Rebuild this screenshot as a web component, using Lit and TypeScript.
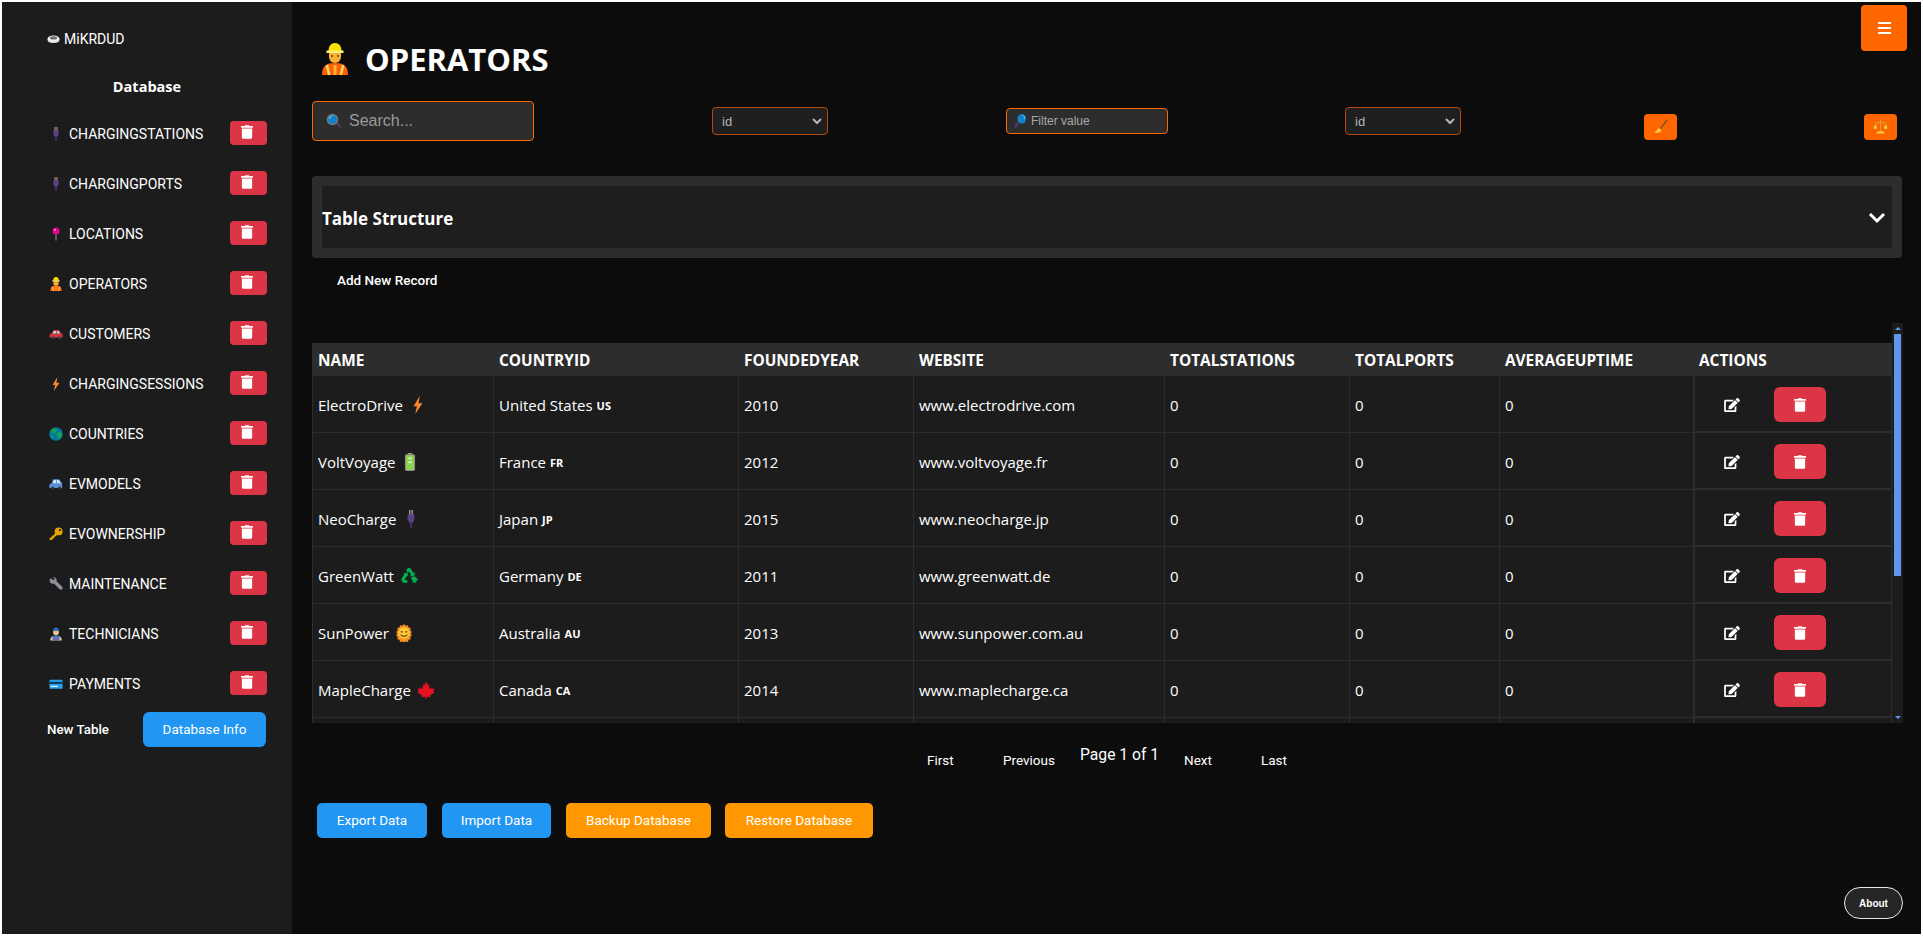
import { LitElement, html, css, svg } from "lit";
import { customElement } from "lit/decorators.js";

const em = (inner: unknown, w = 14, h = 14) =>
  html`<svg class="em" width=${w} height=${h} viewBox="0 0 32 32">${inner}</svg>`;

const plug = svg`<path d="M12.500 0h2.500v9h-2.500zM17 0h2.500v9H17z" fill="#a89a8c"/><path d="M10 8h12v9l-3.500 6h-5L10 17z" fill="#5c3f85"/><path d="M14.300 22h3.400v10h-3.400z" fill="#46306a"/>`;
const pin = svg`<path d="M14.700 14h2.600v17h-2.600z" fill="#8a8a8a"/><circle cx="16" cy="9" r="8" fill="#e3008c"/><circle cx="13.500" cy="6.500" r="2.200" fill="#ffb3e0"/>`;
const worker = svg`<path d="M3 32c0-9 4-12 13-12s13 3 13 12z" fill="#f7630c"/><path d="M9 21.500l2.500 10.500H9l-2.500-9.500zM23 21.500L20.500 32H23l2.500-9.500z" fill="#ffd35a"/><path d="M14.500 22h3v10h-3z" fill="#ffb02e"/><path d="M10 9h12v5a6 6 0 0 1-12 0z" fill="#f9b233"/><circle cx="13" cy="13" r="1" fill="#6b3e00"/><circle cx="19" cy="13" r="1" fill="#6b3e00"/><path d="M9.500 8c0-5 2.500-8 6.500-8s6.500 3 6.500 8z" fill="#fce100"/><path d="M7.500 7.500h17V10h-17z" fill="#fff27a"/>`;
const car = svg`<path d="M10 7h13l5 8h3v9H1v-7l5-2z" fill="#d13438"/><path d="M11 9h5v6H8zM18 9h4l3.500 6H18z" fill="#a6d8f0"/><circle cx="9" cy="24" r="3.500" fill="#444"/><circle cx="24" cy="24" r="3.500" fill="#444"/>`;
const bolt = svg`<path d="M19 0L8 18h6l-3 14 13-19h-7z" fill="#f7872e"/>`;
const globe = svg`<circle cx="16" cy="16" r="15.500" fill="#0078a8"/><path d="M8 4l8-1 3 4-4 3-1 5-5-1-4-5zM18 13l8-2 4 6-4 9-5 1-1-7-3-3zM3 19l5 1 3 5-2 2-5-4z" fill="#16a34a"/>`;
const van = svg`<path d="M9 5h14l7 9v11H1v-9l5-1z" fill="#5b8fd9"/><path d="M11 7h5v7H8zM18 7h4l5 7h-9z" fill="#cfe6f7"/><circle cx="9" cy="25" r="3.500" fill="#333"/><circle cx="24" cy="25" r="3.500" fill="#333"/>`;
const key = svg`<circle cx="22" cy="10" r="9" fill="#eaa300"/><circle cx="25" cy="7" r="2.500" fill="#1c1c1c"/><path d="M16 12l4 4L7 29l-5 1-1-4 2-2h2v-2h2v-2h2z" fill="#eaa300"/>`;
const wrench = svg`<path d="M4 2l5 5 3-1 1-3-5-2c6-2 11 2 9 8l12 12c2 2 3 5 1 7s-5 1-7-1L11 15C5 17 0 12 2 6z" fill="#8e8e9a"/>`;
const tech = svg`<path d="M3 31c0-8 4-11 13-11s13 3 13 11z" fill="#f9c58c"/><path d="M8 21l3-1h10l3 1v10H8z" fill="#3b78c9"/><rect x="13" y="25" width="6" height="3" fill="#e05a7a"/><circle cx="16" cy="12" r="6.500" fill="#f9c58c"/><path d="M9 9c0-5 3-8 7-8s7 3 7 8z" fill="#2f6db5"/>`;
const card = svg`<rect x="1" y="6" width="30" height="21" rx="2" fill="#29a3e8"/><rect x="1" y="11" width="30" height="5" fill="#123a5a"/><rect x="4" y="20" width="16" height="3" fill="#d7f0ff"/>`;
const battery = svg`<rect x="12" y="0" width="8" height="3" fill="#999"/><rect x="7" y="2" width="18" height="30" rx="3" fill="#8c8c8c"/><rect x="9" y="4" width="14" height="26" rx="1" fill="#8fd14f"/><rect x="13" y="8" width="6" height="3" fill="#d6f5b8"/><rect x="13" y="15" width="6" height="3" fill="#d6f5b8"/>`;
const recycle = svg`<path d="M11 5l5-4 4 3 4 7 3-2-2 8-8-1 3-2-4-6-3 3zM8 12l-6 10 3 6h8v-5H8l5-8 2 2-2-7-8 1zM29 19l-3-2-7 2 4 6-2 2 8 1 0-3 3-3z" fill="#00b050"/>`;
const sun = svg`<path d="M16 0l3 3 4-1 1 4 4 1-1 4 3 3-2 3 2 3-3 3 1 4-4 1-1 4-4-1-3 3-3-3-4 1-1-4-4-1 1-4-3-3 2-3-2-3 3-3-1-4 4-1 1-4 4 1z" fill="#f7931e"/><circle cx="16" cy="16" r="10" fill="#ffc83d"/><path d="M10 14h4M18 14h4" stroke="#7a4a00" stroke-width="2"/><path d="M10 19c3 4 9 4 12 0" stroke="#7a4a00" stroke-width="2" fill="none"/>`;
const maple = svg`<path d="M16 1l3 6 3-1-1 8 4-3 1 3 5-1-2 5 2 2-8 6 1 3-7-1v5h-2v-5l-7 1 1-3-8-6 2-2-2-5 5 1 1-3 4 3-1-8 3 1z" fill="#e81123"/>`;
const lens = svg`<path d="M19 20l3-3 9 10-3 3z" fill="#4d3a6b"/><circle cx="13" cy="13" r="11.500" fill="#7b7b7b"/><circle cx="13" cy="13" r="9" fill="#1180c4"/><path d="M7 12c0-3 3-6 6-6" stroke="#8fd0f5" stroke-width="2" fill="none"/>`;
const lens2 = svg`<path d="M9 18l5 3-7 11-5-3z" fill="#4d3a6b"/><ellipse cx="20" cy="11" rx="10" ry="11" fill="#1180c4"/><path d="M22 3c3 1 5 4 4 8" stroke="#8fd0f5" stroke-width="2" fill="none"/>`;
const broom = svg`<path d="M29 1l2.500 1.500-15 20L14 21z" fill="#7a5230"/><path d="M12 19l6 4-3 6-12 1z" fill="#ffc83d"/>`;
const scales = svg`<path d="M15 1h2v26h-2zM4 7h24v2H4z" fill="#d9a441"/><path d="M1 18l4-9 4 9a4 4 0 0 1-8 0zM23 18l4-9 4 9a4 4 0 0 1-8 0z" fill="#ffc83d" stroke="#c77a10"/><path d="M8 31h16v-3l-4-2h-8l-4 2z" fill="#ffc83d"/>`;
const disk = svg`<ellipse cx="16" cy="15" rx="15" ry="9" fill="#f2f2f2"/><ellipse cx="16" cy="12" rx="9" ry="4" fill="#6f6f6f"/><path d="M2 16c2 7 26 7 28 0v4c-3 6-25 6-28 0z" fill="#d0d0d0"/>`;

const trashPath = html`<svg class="fa" viewBox="0 0 448 512" width="12" height="14"><path fill="currentColor" d="M32 464a48 48 0 0 0 48 48h288a48 48 0 0 0 48-48V128H32zM432 32H312l-9.400-18.700A24 24 0 0 0 281.100 0H166.800a23.700 23.700 0 0 0-21.400 13.300L136 32H16A16 16 0 0 0 0 48v32a16 16 0 0 0 16 16h416a16 16 0 0 0 16-16V48a16 16 0 0 0-16-16z"/></svg>`;
const editIcon = html`<svg class="fa" viewBox="0 0 576 512" width="16" height="14"><path fill="currentColor" d="M402.600 83.200l90.200 90.200c3.800 3.800 3.800 10 0 13.800L274.400 405.600l-92.800 10.300c-12.400 1.400-22.900-9.100-21.500-21.500l10.300-92.800L388.800 83.200c3.800-3.800 10-3.800 13.800 0zm162-22.900l-48.800-48.800c-15.200-15.200-39.900-15.200-55.200 0l-35.400 35.400c-3.800 3.800-3.800 10 0 13.800l90.200 90.200c3.800 3.800 10 3.800 13.800 0l35.400-35.400c15.200-15.300 15.200-40 0-55.200zM384 346.200V448H64V128h229.800c3.200 0 6.200-1.300 8.500-3.500l40-40c7.600-7.600 2.200-20.500-8.500-20.500H48C21.500 64 0 85.500 0 112v352c0 26.500 21.500 48 48 48h352c26.500 0 48-21.500 48-48V306.200c0-10.700-12.900-16-20.500-8.500l-40 40c-2.200 2.300-3.500 5.300-3.500 8.500z"/></svg>`;

const tables: [string, unknown][] = [
  ["CHARGINGSTATIONS", plug], ["CHARGINGPORTS", plug], ["LOCATIONS", pin], ["OPERATORS", worker],
  ["CUSTOMERS", car], ["CHARGINGSESSIONS", bolt], ["COUNTRIES", globe], ["EVMODELS", van],
  ["EVOWNERSHIP", key], ["MAINTENANCE", wrench], ["TECHNICIANS", tech], ["PAYMENTS", card],
];

const rows: [string, unknown, string, string, string, string][] = [
  ["ElectroDrive", bolt, "United States", "US", "2010", "www.electrodrive.com"],
  ["VoltVoyage", battery, "France", "FR", "2012", "www.voltvoyage.fr"],
  ["NeoCharge", plug, "Japan", "JP", "2015", "www.neocharge.jp"],
  ["GreenWatt", recycle, "Germany", "DE", "2011", "www.greenwatt.de"],
  ["SunPower", sun, "Australia", "AU", "2013", "www.sunpower.com.au"],
  ["MapleCharge", maple, "Canada", "CA", "2014", "www.maplecharge.ca"],
  ["", null, "", "", "", ""],
];

@customElement("app-root")
export class AppRoot extends LitElement {
  static styles = css`
    :host { display: block; width: 1923px; height: 936px; box-sizing: border-box; border: 2px solid #fff; background: #0c0c0c; color: #fff; font-family: Roboto, "Liberation Sans", sans-serif; overflow: hidden; position: relative; }
    * { box-sizing: border-box; }
    .em { display: block; flex: none; }
    .fa { display: block; flex: none; }
    .shell { display: flex; height: 100%; }

    .side { width: 290px; flex: none; background: #1c1c1c; padding: 28px 25px 0 45px; display: flex; flex-direction: column; }
    .brand { display: flex; align-items: center; gap: 4px; font-size: 14px; height: 18px; }
    .dbh { font-family: "Open Sans", sans-serif; font-weight: 700; font-size: 14.5px; text-align: center; margin-top: 29px; height: 20px; margin-left: 10px; margin-right: 30px; }
    .trow { display: flex; align-items: center; height: 50px; }
    .tfirst { margin-top: 12px; }
    .tlabel { display: flex; align-items: center; gap: 6px; font-size: 14px; flex: 1; padding-left: 2px; white-space: nowrap; }
    .tlabel .ic { width: 14px; display: flex; justify-content: center; }
    .del { width: 37px; height: 24px; margin-bottom: 2px; border-radius: 4px; background: #dc3545; color: #fff; display: flex; align-items: center; justify-content: center; padding: 0 4px 3px 0; }
    .sidefoot { display: flex; justify-content: space-between; align-items: center; margin-top: 3px; padding-right: 1px; }
    .newt { font-size: 13.33px; font-weight: 500; }
    .info { width: 123px; height: 35px; padding-bottom: 1px; background: #2196f3; border-radius: 6px; display: flex; align-items: center; justify-content: center; font-size: 13.5px; }

    .main { flex: 1; min-width: 0; padding: 37px 0 0 20px; display: flex; flex-direction: column; }
    .title { display: flex; align-items: center; gap: 14px; height: 40px; margin-left: 7px; font-family: "Open Sans", sans-serif; font-weight: 700; font-size: 31px; }
    .tools { display: flex; align-items: center; margin-top: 22px; height: 40px; }
    .search { width: 222px; height: 40px; border: 1px solid #ff6600; border-radius: 4px; background: #2d2d2d; display: flex; align-items: center; gap: 7px; padding-left: 13px; font-size: 16px; color: #9a9a9a; font-family: "Liberation Sans", sans-serif; }
    .sel { width: 116px; height: 28px; border: 1px solid #b34a0a; border-radius: 4px; background: #1f1f1f; display: flex; align-items: center; justify-content: space-between; padding: 0 5px 0 9px; font-size: 13px; color: #b5b5b5; font-family: "Liberation Sans", sans-serif; }
    .s1 { margin-left: 178px; }
    .filter { width: 162px; height: 26px; margin-left: 178px; border: 1px solid #ff6600; border-radius: 4px; background: #2d2d2d; display: flex; align-items: center; gap: 4px; padding-left: 6px; font-size: 12px; color: #a8a8a8; font-family: "Liberation Sans", sans-serif; }
    .s2 { margin-left: 177px; }
    .ob { width: 33px; height: 26px; border-radius: 4px; background: #ff6600; display: flex; align-items: center; justify-content: center; margin-top: 11px; }
    .o1 { margin-left: 183px; }
    .o2 { margin-left: 187px; }

    .struct { margin-top: 35px; width: 1590px; height: 82px; background: #2d2d2d; border-radius: 4px; padding: 10px; }
    .structin { height: 62px; background: #1e1e1e; display: flex; align-items: center; justify-content: space-between; padding: 2px 6px 0 0; font-family: "Open Sans", sans-serif; font-weight: 700; font-size: 17px; }
    .add { margin: 14px 0 0 25px; height: 16px; line-height: 16px; font-size: 13.5px; font-weight: 500; }

    .scroll { margin-top: 35px; width: 1591px; height: 400px; padding-top: 20px; display: flex; overflow: hidden; }
    .grid { width: 1580px; flex: none; height: 380px; overflow: hidden; font-family: "Open Sans", sans-serif; }
    .hd, .rw { display: grid; grid-template-columns: 181px 245px 175px 251px 185px 150px 194px 199px; }
    .hd { height: 33px; padding-top: 2px; background: #2d2d2d; font-weight: 700; font-size: 15.4px; align-items: center; }
    .hd div { padding-left: 6px; }
    .rw { height: 57px; background: #1c1c1c; font-size: 15px; }
    .rw > div { padding: 1px 0 0 5px; border-left: 1px solid #2d2d2d; border-bottom: 1px solid #2d2d2d; display: flex; align-items: center; white-space: nowrap; }
    .rw > div.act { border-left-width: 2px; border-right: 1px solid #2d2d2d; border-bottom-width: 2px; padding-left: 29px; gap: 34px; padding-top: 2px; }
    .name { gap: 6px; }
    .cc { font-size: 11px; font-weight: 700; margin-left: 4px; margin-top: 2px; }
    .rdel { width: 52px; height: 35px; border-radius: 6px; background: #dc3545; display: flex; align-items: center; justify-content: center; }
    .bar { width: 11px; flex: none; margin-top: -20px; height: 400px; background: #1c1c1c; position: relative; display: flex; flex-direction: column; align-items: center; padding-top: 11px; }
    .thumb { width: 7px; height: 242px; background: #6495ed; }
    .arr { position: absolute; left: 50%; margin-left: -3px; width: 0; height: 0; border-left: 3px solid transparent; border-right: 3px solid transparent; }
    .up { top: 4px; border-bottom: 3px solid #6495ed; }
    .dn { bottom: 4px; border-top: 3px solid #6495ed; }

    .pager { display: flex; align-items: flex-start; margin-top: 20px; padding-left: 615px; font-size: 13.5px; height: 34px; }
    .pager span { display: block; line-height: 16px; margin-top: 9px; }
    .pager .pg { font-size: 15.7px; margin-top: 2px; line-height: 20px; }
    .p1 { width: 76px; }
    .p2 { width: 77px; }
    .pg { width: 104px; }
    .p4 { width: 77px; }
    .bulk { display: flex; gap: 15px; margin: 26px 0 0 5px; }
    .bulk div { height: 35px; padding-bottom: 1px; border-radius: 5px; display: flex; align-items: center; justify-content: center; font-size: 13.5px; }
    .blue { background: #2196f3; }
    .amber { background: #ff9800; }
    .w1 { width: 110px; }
    .w2 { width: 109px; }
    .w3 { width: 145px; }
    .bulk .w4 { width: 148px; margin-left: -1px; }

    .burger { position: absolute; left: 1859px; top: 3px; width: 46px; height: 46px; background: #ff6600; border-radius: 4px; display: flex; align-items: center; justify-content: center; }
    .about { position: absolute; left: 1842px; top: 885px; width: 59px; height: 32px; border: 1px solid #e8e8e8; border-radius: 16px; background: #262626; display: flex; align-items: center; justify-content: center; font-family: "Liberation Sans", sans-serif; font-size: 10px; font-weight: 700; }
  `;

  render() {
    return html`
      <div class="shell">
        <aside class="side">
          <div class="brand">${em(disk, 13, 13)}<span>MiKRDUD</span></div>
          <div class="dbh">Database</div>
          <div class="tfirst">
            ${tables.map(([n, ic]) => html`<div class="trow"><div class="tlabel"><span class="ic">${em(ic)}</span><span>${n}</span></div><div class="del">${trashPath}</div></div>`)}
          </div>
          <div class="sidefoot"><span class="newt">New Table</span><div class="info">Database Info</div></div>
        </aside>
        <main class="main">
          <div class="title">${em(worker, 32, 32)}<span>OPERATORS</span></div>
          <div class="tools">
            <div class="search">${em(lens, 16, 16)}<span>Search...</span></div>
            <div class="sel s1"><span>id</span>${this.chev()}</div>
            <div class="filter">${em(lens2, 14, 14)}<span>Filter value</span></div>
            <div class="sel s2"><span>id</span>${this.chev()}</div>
            <div class="ob o1">${em(broom, 15, 15)}</div>
            <div class="ob o2">${em(scales, 15, 15)}</div>
          </div>
          <section class="struct"><div class="structin"><span>Table Structure</span>
            <svg width="18" height="12" viewBox="0 0 18 12"><path d="M2 2l7 7 7-7" fill="none" stroke="#fff" stroke-width="3"/></svg></div></section>
          <div class="add">Add New Record</div>
          <div class="scroll">
            <div class="grid">
              <div class="hd">${["NAME","COUNTRYID","FOUNDEDYEAR","WEBSITE","TOTALSTATIONS","TOTALPORTS","AVERAGEUPTIME","ACTIONS"].map((h) => html`<div>${h}</div>`)}</div>
              ${rows.map((r) => html`<div class="rw">
                <div class="name"><span>${r[0]}</span>${r[1] ? em(r[1], 18, 18) : ""}</div>
                <div><span>${r[2]}</span>${r[3] ? html`<span class="cc">${r[3]}</span>` : ""}</div>
                <div>${r[4]}</div><div>${r[5]}</div>
                <div>${r[0] ? "0" : ""}</div><div>${r[0] ? "0" : ""}</div><div>${r[0] ? "0" : ""}</div>
                <div class="act">${r[0] ? html`${editIcon}<div class="rdel">${trashPath}</div>` : ""}</div>
              </div>`)}
            </div>
            <div class="bar"><i class="arr up"></i><div class="thumb"></div><i class="arr dn"></i></div>
          </div>
          <div class="pager">
            <span class="p1">First</span><span class="p2">Previous</span><span class="pg">Page 1 of 1</span><span class="p4">Next</span><span>Last</span>
          </div>
          <div class="bulk">
            <div class="blue w1">Export Data</div><div class="blue w2">Import Data</div>
            <div class="amber w3">Backup Database</div><div class="amber w4">Restore Database</div>
          </div>
        </main>
      </div>
      <div class="burger"><svg width="13" height="12" viewBox="0 0 13 12"><path d="M0 1h13M0 6h13M0 11h13" stroke="#fff" stroke-width="2"/></svg></div>
      <div class="about">About</div>
    `;
  }
  chev() {
    return html`<svg width="10" height="7" viewBox="0 0 10 7"><path d="M1 1l4 4 4-4" fill="none" stroke="#b5b5b5" stroke-width="2"/></svg>`;
  }
}
